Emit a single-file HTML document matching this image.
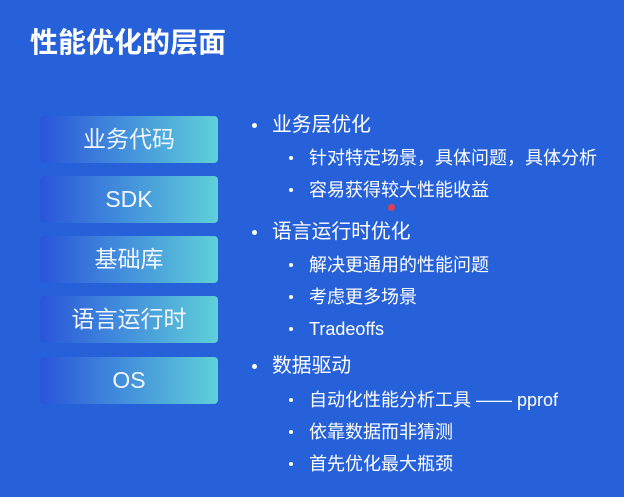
<!DOCTYPE html>
<html><head><meta charset="utf-8"><style>
html,body{margin:0;padding:0}
body{width:624px;height:497px;overflow:hidden;background:#2761d9;font-family:"Liberation Sans","Noto Sans CJK SC",sans-serif;color:#fff;position:relative}
.t{position:absolute;left:30px;top:28px;font-size:28px;font-weight:bold;line-height:30px}
.b{position:absolute;left:40px;width:178px;height:47px;border-radius:4px;background:linear-gradient(90deg,#2a55d9 0%,#3f86dc 40%,#5fd0d8 100%);font-size:23px;line-height:47px;text-align:center;color:#f0f6ff}
.l{position:absolute;white-space:nowrap;line-height:22px}
.l1{left:272px;font-size:19.8px}
.l2{left:309px;font-size:18px}
.l1:before,.l2:before{content:"";position:absolute;width:5px;height:5px;border-radius:50%;background:#fff;top:9px}
.l1:before{left:-20px}
.l2:before{left:-20px;width:4px;height:4px}
</style></head><body>
<div class="t">性能优化的层面</div>
<div class="b" style="top:116px">业务代码</div>
<div class="b" style="top:176px">SDK</div>
<div class="b" style="top:236px">基础库</div>
<div class="b" style="top:296px">语言运行时</div>
<div class="b" style="top:357px">OS</div>
<div class="l l1" style="top:114px">业务层优化</div>
<div class="l l2" style="top:147px">针对特定场景，具体问题，具体分析</div>
<div class="l l2" style="top:179px">容易获得较大性能收益</div>
<div class="l l1" style="top:221px">语言运行时优化</div>
<div class="l l2" style="top:254px">解决更通用的性能问题</div>
<div class="l l2" style="top:286px">考虑更多场景</div>
<div class="l l2" style="top:318px">Tradeoffs</div>
<div class="l l1" style="top:355px">数据驱动</div>
<div class="l l2" style="top:389px">自动化性能分析工具 —— pprof</div>
<div class="l l2" style="top:421px">依靠数据而非猜测</div>
<div class="l l2" style="top:453px">首先优化最大瓶颈</div>
<div style="position:absolute;left:388px;top:204px;width:7px;height:7px;border-radius:50%;background:#e04050"></div>
</body></html>
